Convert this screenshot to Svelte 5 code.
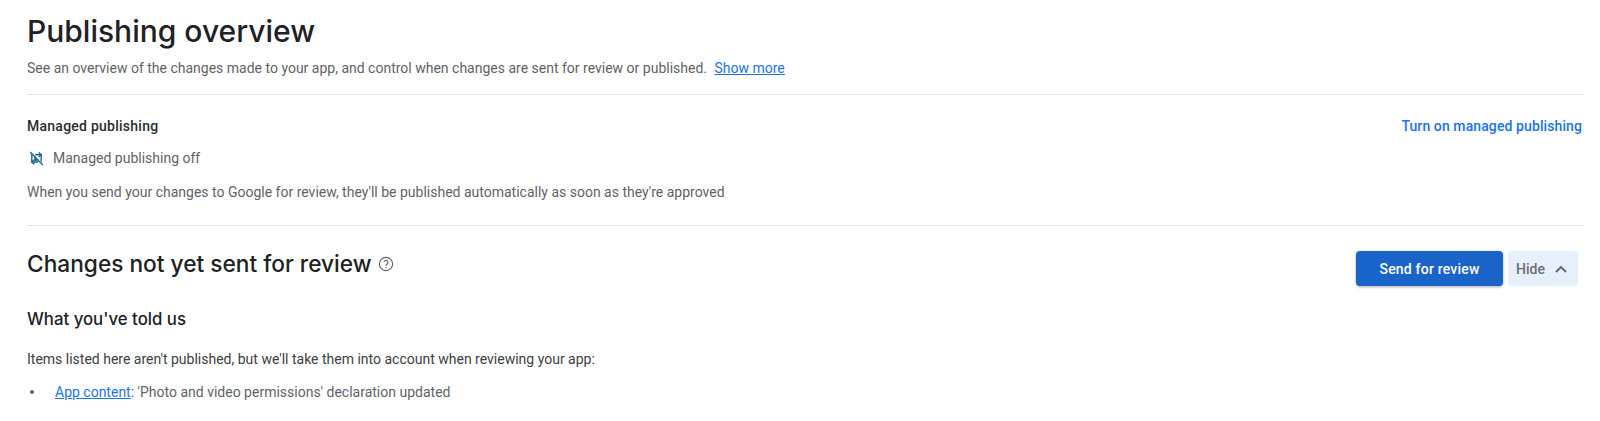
<script>
	const items = [
		{ link: "App content", rest: ": 'Photo and video permissions' declaration updated" }
	];
</script>

<div class="page">
	<header class="head">
		<h1>Publishing overview</h1>
		<p class="muted">
			See an overview of the changes made to your app, and control when changes are sent for review or published.
			<a class="more" href="#more">Show more</a>
		</p>
	</header>

	<section class="managed">
		<div class="managed-text">
			<h4>Managed publishing</h4>
			<div class="status">
				<svg viewBox="0 0 24 24" width="15" height="15" fill="none" stroke="#1a6491" stroke-width="2.200">
					<path d="M2 1.500 22 22.500" />
					<path d="M4.500 4.500v13h10" />
					<path d="M10 6h9.500v11" />
					<path d="M15.500 2.500 19.500 6l-4 3.500M8.500 14 4.500 17.500 8.500 21" />
					<path d="M9 9.500 13.500 15 9 15.500z" fill="#1a6491" stroke-width="1.200" />
				</svg>
				<span class="muted">Managed publishing off</span>
			</div>
			<p class="muted">When you send your changes to Google for review, they'll be published automatically as soon as they're approved</p>
		</div>
		<a class="turn-on" href="#on">Turn on managed publishing</a>
	</section>

	<section class="changes">
		<div class="changes-head">
			<div class="changes-title">
				<h2>Changes not yet sent for review</h2>
				<svg viewBox="0 0 24 24" width="16" height="16" fill="none" stroke="#5f6368" stroke-width="1.700">
					<circle cx="12" cy="12" r="10" />
					<path d="M9 9.500a3 3 0 1 1 4.700 2.500c-1.100.8-1.700 1.400-1.700 2.800" />
					<path d="M12 16.500v2" />
				</svg>
			</div>
			<div class="actions">
				<button class="primary">Send for review</button>
				<button class="hide">
					Hide
					<svg viewBox="0 0 12 8" width="12" height="8" fill="none" stroke="#5f6368" stroke-width="1.800">
						<path d="M1 7 6 2l5 5" />
					</svg>
				</button>
			</div>
		</div>
		<h3>What you've told us</h3>
		<p class="intro">Items listed here aren't published, but we'll take them into account when reviewing your app:</p>
		<ul>
			{#each items as item}
				<li><a href="#content">{item.link}</a>{item.rest}</li>
			{/each}
		</ul>
	</section>
</div>

<style>
	:global(body) {
		margin: 0;
		background: #fff;
		font-family: Roboto, "Liberation Sans", sans-serif;
		overflow: hidden;
	}

	.page {
		height: 421px;
		padding: 0 16px 0 27px;
		box-sizing: border-box;
		overflow: hidden;
	}

	h1, h2, h3, h4, p, ul {
		margin: 0;
		font-weight: 400;
	}

	a {
		color: #1a73e8;
	}

	.muted {
		color: #5f6368;
	}

	.head {
		padding-top: 12px;
		height: 95px;
		box-sizing: border-box;
		border-bottom: 1px solid #e3e5e7;
	}

	h1 {
		font-family: Inter, Roboto, sans-serif;
		font-size: 30px;
		line-height: 38px;
		color: #202124;
		font-weight: 500;
	}

	.head p {
		margin-top: 8px;
		font-size: 14px;
		line-height: 20px;
	}

	.more {
		margin-left: 4px;
	}

	.managed {
		display: flex;
		justify-content: space-between;
		align-items: flex-start;
		height: 131px;
		box-sizing: border-box;
		padding-top: 21px;
		border-bottom: 1px solid #e3e5e7;
		font-size: 14px;
		line-height: 20px;
	}

	h4 {
		font-size: 14px;
		line-height: 20px;
		font-weight: 500;
		letter-spacing: 0.25px;
		color: #2b2d30;
	}

	.status {
		display: flex;
		align-items: center;
		gap: 9px;
		margin-top: 12px;
		margin-left: 2px;
	}

	.managed p {
		margin-top: 14px;
	}

	.turn-on {
		margin-right: 2px;
		text-decoration: none;
		font-weight: 500;
		letter-spacing: 0.1px;
	}

	.changes-head {
		display: flex;
		justify-content: space-between;
		align-items: flex-start;
		margin-top: 23px;
		height: 37px;
	}

	.changes-title {
		display: flex;
		align-items: center;
		gap: 6px;
	}

	h2 {
		font-family: Inter, Roboto, sans-serif;
		font-size: 22.7px;
		line-height: 30px;
		color: #202124;
		font-weight: 500;
	}

	.actions {
		display: flex;
		gap: 5px;
		margin: 2px 6px 0 0;
	}

	button {
		font: 500 14px Roboto, sans-serif;
		height: 35px;
		border: 0;
		border-radius: 4px;
	}

	.primary {
		width: 147px;
		background: #1a63c8;
		color: #fff;
		letter-spacing: 0.2px;
		box-shadow: 0 1px 3px rgba(60, 64, 67, 0.45);
	}

	.hide {
		display: flex;
		align-items: center;
		gap: 10px;
		width: 70px;
		padding: 0 0 0 8px;
		background: #e6effc;
		color: #6b6f74;
	}

	h3 {
		font-family: Inter, Roboto, sans-serif;
		margin-top: 21px;
		font-size: 16.800px;
		line-height: 24px;
		font-weight: 500;
		color: #202124;
	}

	.intro {
		margin-top: 18px;
		font-size: 14px;
		line-height: 20px;
		color: #3c4043;
	}

	ul {
		margin-top: 13px;
		list-style: none;
		padding: 0;
		font-size: 14px;
		line-height: 20px;
		color: #5f6368;
	}

	li {
		display: flex;
		align-items: center;
	}

	li::before {
		content: "";
		width: 4px;
		height: 4px;
		margin: 0 21px 0 3px;
		border-radius: 50%;
		background: #5f6368;
	}
</style>
